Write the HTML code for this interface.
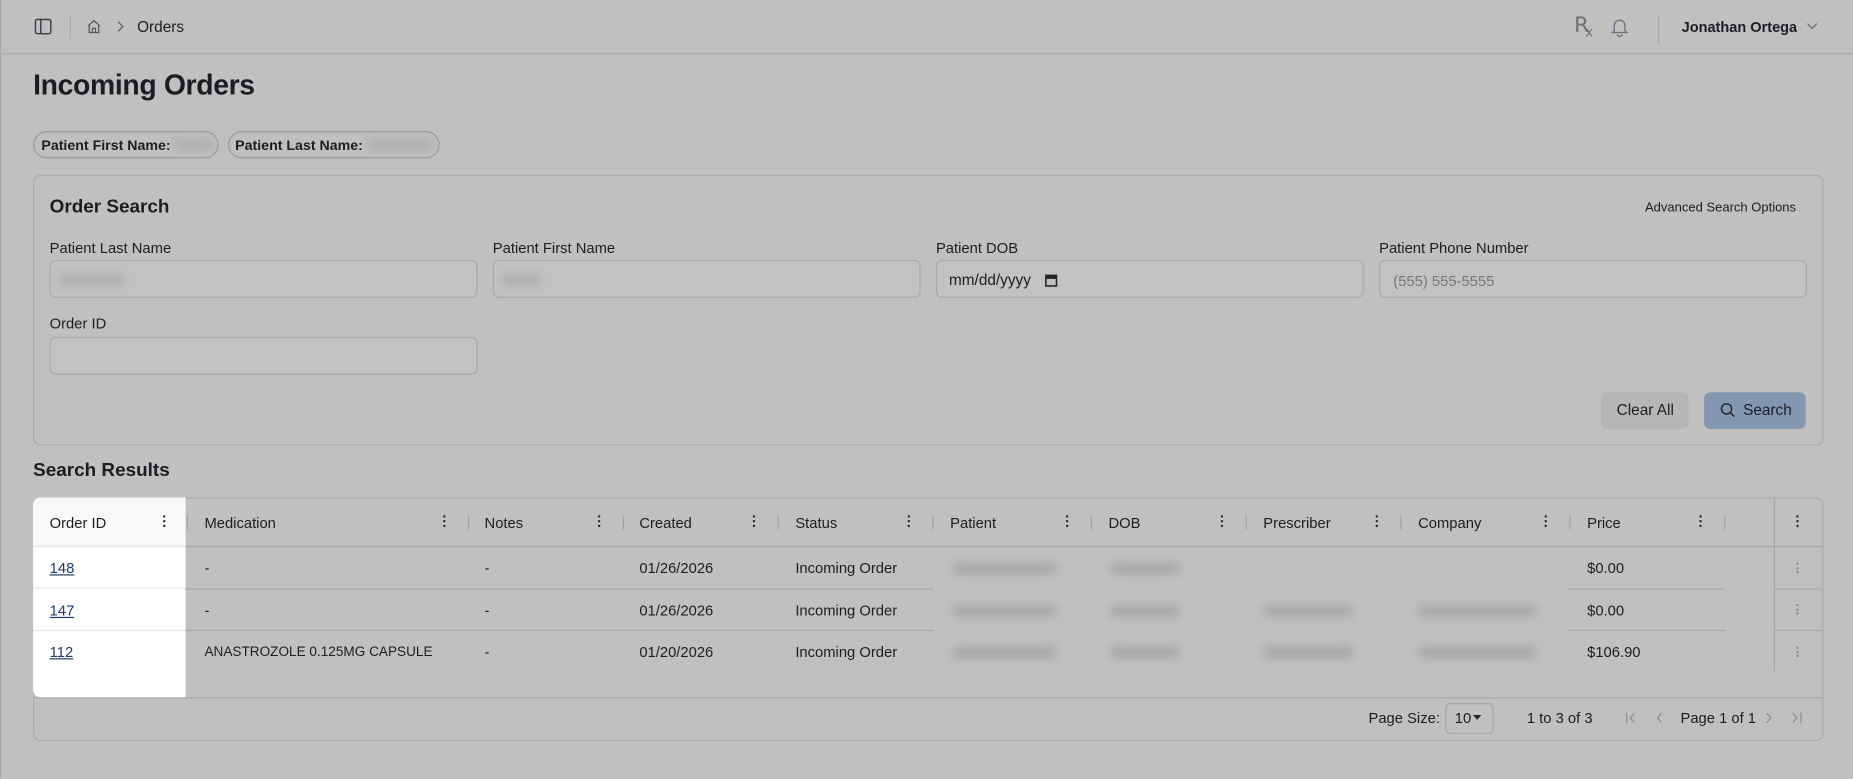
<!DOCTYPE html>
<html><head><meta charset="utf-8">
<style>
html,body{margin:0;padding:0;width:1853px;height:779px;overflow:hidden;background:#c0c0c0;}
#w{position:absolute;left:0;top:0;width:1568px;height:659px;transform:scale(1.18176);transform-origin:0 0;font-family:"Liberation Sans",sans-serif;color:#1b1d22;}
.a{position:absolute;}
.t{position:absolute;white-space:nowrap;font-size:12.5px;line-height:14px;}
.b{font-weight:bold;}
.inp{position:absolute;height:32px;border:1px solid #a8a8a8;border-radius:5px;background:#c2c2c2;box-sizing:border-box;}
.blur{position:absolute;background:#a8a8a8;filter:blur(3.5px);border-radius:3px;height:10px;}
.dots{position:absolute;width:3px;}
.dots i{display:block;width:2.4px;height:2.4px;border-radius:50%;background:#222;margin-bottom:1.6px;}
.sep{position:absolute;width:1px;height:12px;background:#a0a0a0;top:436px;}
.hl{position:absolute;height:1px;background:#a6a6a6;}
</style></head><body><div id="w">
<!-- header -->
<div class="a" style="left:0;top:0;width:1568px;height:46px;border-bottom:1px solid #aaa;box-sizing:border-box;"></div>
<div class="a" style="left:0;top:0;width:1px;height:659px;background:#aaa"></div>
<svg class="a" style="left:29px;top:15px" width="15" height="15" viewBox="0 0 15 15"><rect x="1" y="1.5" width="13" height="12" rx="1.5" fill="none" stroke="#3a3d45" stroke-width="1.2"/><line x1="5.5" y1="1.5" x2="5.5" y2="13.5" stroke="#3a3d45" stroke-width="1.2"/></svg>
<div class="a" style="left:59px;top:13px;width:1px;height:20px;background:#a8a8a8"></div>
<svg class="a" style="left:73px;top:16px" width="13" height="13" viewBox="0 0 13 13"><path d="M1.5 6 L6.5 1.5 L11.5 6 M2.5 5 V11.5 H10.5 V5 M5.2 11.5 V8 H7.8 V11.5" fill="none" stroke="#555" stroke-width="1"/></svg>
<svg class="a" style="left:98px;top:17px" width="8" height="11" viewBox="0 0 8 11"><path d="M2 1.5 L6 5.5 L2 9.5" fill="none" stroke="#555" stroke-width="1"/></svg>
<div class="t" style="left:116px;top:16px;font-size:13px;">Orders</div>
<div class="t" style="left:1332px;top:12px;font-size:18px;line-height:20px;color:#6b7079;font-family:'DejaVu Sans',sans-serif;">R<span style="font-size:11px;margin-left:-3px;position:relative;top:4px">x</span></div>
<svg class="a" style="left:1362px;top:14px" width="17" height="18" viewBox="0 0 17 18"><path d="M4 12 V7.5 A4.5 4.5 0 0 1 13 7.5 V12 L14.5 13.5 H2.5 Z M6.5 15 A2 2 0 0 0 10.5 15" fill="none" stroke="#6b7079" stroke-width="1.1"/></svg>
<div class="a" style="left:1403px;top:13px;width:1px;height:24px;background:#a8a8a8"></div>
<div class="t b" style="left:1423px;top:16px;font-size:12.3px;">Jonathan Ortega</div>
<svg class="a" style="left:1528px;top:18px" width="11" height="8" viewBox="0 0 11 8"><path d="M1.5 2 L5.5 6 L9.5 2" fill="none" stroke="#666" stroke-width="1"/></svg>

<div class="t b" style="left:28px;top:60px;font-size:24px;line-height:26px;letter-spacing:-0.3px;">Incoming Orders</div>
<!-- pills -->
<div class="a" style="left:28px;top:111px;width:157px;height:23px;border:1px solid #999;border-radius:12px;box-sizing:border-box;"></div>
<div class="t b" style="left:35px;top:116px;font-size:12px;">Patient First Name:</div>
<div class="blur" style="left:147px;top:117px;width:34px;height:11px;background:#b0b0b0"></div>
<div class="a" style="left:193px;top:111px;width:179px;height:23px;border:1px solid #999;border-radius:12px;box-sizing:border-box;"></div>
<div class="t b" style="left:199px;top:116px;font-size:12px;">Patient Last Name:</div>
<div class="blur" style="left:311px;top:117px;width:55px;height:11px;background:#b0b0b0"></div>

<!-- search card -->
<div class="a" style="left:28px;top:148px;width:1515px;height:229px;border:1px solid #aaa;border-radius:6px;box-sizing:border-box;"></div>
<div class="t b" style="left:42px;top:167px;font-size:16px;line-height:18px;">Order Search</div>
<div class="t" style="left:1392px;top:169px;font-size:11px;">Advanced Search Options</div>
<div class="t" style="left:42px;top:203px;">Patient Last Name</div>
<div class="t" style="left:417px;top:203px;">Patient First Name</div>
<div class="t" style="left:792px;top:203px;">Patient DOB</div>
<div class="t" style="left:1167px;top:203px;">Patient Phone Number</div>
<div class="inp" style="left:42px;top:220px;width:362px;"></div>
<div class="blur" style="left:50px;top:232px;width:55px;height:10px;background:#afafaf"></div>
<div class="inp" style="left:417px;top:220px;width:362px;"></div>
<div class="blur" style="left:424px;top:232px;width:34px;height:10px;background:#afafaf"></div>
<div class="inp" style="left:792px;top:220px;width:362px;"></div>
<div class="t" style="left:803px;top:230px;font-size:13px;">mm/dd/yyyy</div>
<svg class="a" style="left:884px;top:231px" width="11" height="12" viewBox="0 0 11 12"><rect x="1" y="2" width="9" height="9" fill="none" stroke="#222" stroke-width="1.3"/><rect x="1" y="2" width="9" height="3" fill="#222"/></svg>
<div class="inp" style="left:1167px;top:220px;width:362px;"></div>
<div class="t" style="left:1179px;top:231px;font-size:12.5px;color:#777;">(555) 555-5555</div>
<div class="t" style="left:42px;top:267px;">Order ID</div>
<div class="inp" style="left:42px;top:285px;width:362px;"></div>
<div class="a" style="left:1355px;top:332px;width:74px;height:31px;background:#b6b6b6;border-radius:5px;"></div>
<div class="t" style="left:1368px;top:340px;font-size:13px;">Clear All</div>
<div class="a" style="left:1442px;top:332px;width:86px;height:31px;background:#8497b1;border-radius:5px;"></div>
<svg class="a" style="left:1455px;top:340px" width="14" height="14" viewBox="0 0 14 14"><circle cx="6" cy="6" r="4.3" fill="none" stroke="#222" stroke-width="1.2"/><path d="M9.2 9.2 L12.5 12.5" stroke="#222" stroke-width="1.2"/></svg>
<div class="t" style="left:1475px;top:340px;font-size:13px;">Search</div>

<div class="t b" style="left:28px;top:390px;font-size:16px;line-height:18px;">Search Results</div>

<!-- table -->
<div class="a" style="left:28px;top:421px;width:1515px;height:206px;border:1px solid #aaa;border-radius:6px;box-sizing:border-box;"></div>
<div class="hl" style="left:28px;top:462px;width:1514px;"></div>
<div class="hl" style="left:28px;top:590px;width:1514px;"></div>
<div class="hl" style="left:28px;top:498px;width:762px;"></div>
<div class="hl" style="left:28px;top:533px;width:762px;"></div>
<div class="hl" style="left:1326px;top:498px;width:134px;"></div>
<div class="hl" style="left:1326px;top:533px;width:134px;"></div>
<div class="hl" style="left:1501px;top:498px;width:41px;"></div>
<div class="hl" style="left:1501px;top:533px;width:41px;"></div>
<div class="a" style="left:1501px;top:422px;width:1px;height:146px;background:#a6a6a6"></div>
<!-- pinned white col -->
<div class="a" style="left:28px;top:421px;width:129px;height:169px;background:#fff;border-radius:6px 0 0 6px;"></div>
<div class="a" style="left:28px;top:421px;width:129px;height:41px;background:#f9f9f9;border-radius:6px 0 0 0;"></div>
<div class="hl" style="left:28px;top:462px;width:129px;background:#e4e4e4"></div>
<div class="hl" style="left:28px;top:497px;width:129px;background:#e4e4e4"></div>
<div class="hl" style="left:28px;top:533px;width:129px;background:#e4e4e4"></div>

<!-- headers -->
<div class="t" style="left:42px;top:436px;">Order ID</div>
<div class="t" style="left:173px;top:436px;">Medication</div>
<div class="t" style="left:410px;top:436px;">Notes</div>
<div class="t" style="left:541px;top:436px;">Created</div>
<div class="t" style="left:673px;top:436px;">Status</div>
<div class="t" style="left:804px;top:436px;">Patient</div>
<div class="t" style="left:938px;top:436px;">DOB</div>
<div class="t" style="left:1069px;top:436px;">Prescriber</div>
<div class="t" style="left:1200px;top:436px;">Company</div>
<div class="t" style="left:1343px;top:436px;">Price</div>
<div class="dots" style="left:138px;top:436px"><i></i><i></i><i></i></div>
<div class="dots" style="left:375px;top:436px"><i></i><i></i><i></i></div>
<div class="dots" style="left:506px;top:436px"><i></i><i></i><i></i></div>
<div class="dots" style="left:637px;top:436px"><i></i><i></i><i></i></div>
<div class="dots" style="left:768px;top:436px"><i></i><i></i><i></i></div>
<div class="dots" style="left:902px;top:436px"><i></i><i></i><i></i></div>
<div class="dots" style="left:1033px;top:436px"><i></i><i></i><i></i></div>
<div class="dots" style="left:1164px;top:436px"><i></i><i></i><i></i></div>
<div class="dots" style="left:1307px;top:436px"><i></i><i></i><i></i></div>
<div class="dots" style="left:1438px;top:436px"><i></i><i></i><i></i></div>
<div class="dots" style="left:1520px;top:436px"><i></i><i></i><i></i></div>
<div class="sep" style="left:158px"></div><div class="sep" style="left:396px"></div><div class="sep" style="left:527px"></div><div class="sep" style="left:658px"></div><div class="sep" style="left:789px"></div><div class="sep" style="left:923px"></div><div class="sep" style="left:1054px"></div><div class="sep" style="left:1185px"></div><div class="sep" style="left:1328px"></div><div class="sep" style="left:1459px"></div>

<!-- rows -->
<div class="t" style="left:42px;top:474px;color:#1d3a6b;text-decoration:underline;">148</div>
<div class="t" style="left:42px;top:510px;color:#1d3a6b;text-decoration:underline;">147</div>
<div class="t" style="left:42px;top:545px;color:#1d3a6b;text-decoration:underline;">112</div>
<div class="t" style="left:173px;top:474px;">-</div>
<div class="t" style="left:173px;top:510px;">-</div>
<div class="t" style="left:173px;top:545px;font-size:11.5px;">ANASTROZOLE 0.125MG CAPSULE</div>
<div class="t" style="left:410px;top:474px;">-</div><div class="t" style="left:410px;top:510px;">-</div><div class="t" style="left:410px;top:545px;">-</div>
<div class="t" style="left:541px;top:474px;">01/26/2026</div><div class="t" style="left:541px;top:510px;">01/26/2026</div><div class="t" style="left:541px;top:545px;">01/20/2026</div>
<div class="t" style="left:673px;top:474px;">Incoming Order</div><div class="t" style="left:673px;top:510px;">Incoming Order</div><div class="t" style="left:673px;top:545px;">Incoming Order</div>
<div class="t" style="left:1343px;top:474px;">$0.00</div><div class="t" style="left:1343px;top:510px;">$0.00</div><div class="t" style="left:1343px;top:545px;">$106.90</div>
<!-- blurred -->
<div class="blur" style="left:806px;top:476px;width:88px"></div><div class="blur" style="left:940px;top:476px;width:58px"></div>
<div class="blur" style="left:806px;top:512px;width:88px"></div><div class="blur" style="left:940px;top:512px;width:58px"></div><div class="blur" style="left:1069px;top:512px;width:76px"></div><div class="blur" style="left:1200px;top:512px;width:100px"></div>
<div class="blur" style="left:806px;top:547px;width:88px"></div><div class="blur" style="left:940px;top:547px;width:58px"></div><div class="blur" style="left:1069px;top:547px;width:76px"></div><div class="blur" style="left:1200px;top:547px;width:100px"></div>
<div class="dots" style="left:1520px;top:476px"><i style="background:#888;width:2px;height:2px"></i><i style="background:#888;width:2px;height:2px"></i><i style="background:#888;width:2px;height:2px"></i></div>
<div class="dots" style="left:1520px;top:511px"><i style="background:#888;width:2px;height:2px"></i><i style="background:#888;width:2px;height:2px"></i><i style="background:#888;width:2px;height:2px"></i></div>
<div class="dots" style="left:1520px;top:547px"><i style="background:#888;width:2px;height:2px"></i><i style="background:#888;width:2px;height:2px"></i><i style="background:#888;width:2px;height:2px"></i></div>

<!-- footer -->
<div class="t" style="left:1158px;top:601px;">Page Size:</div>
<div class="a" style="left:1223px;top:595px;width:41px;height:26px;border:1px solid #a6a6a6;border-radius:4px;box-sizing:border-box;"></div>
<div class="t" style="left:1231px;top:601px;">10</div>
<svg class="a" style="left:1246px;top:604px" width="8" height="6" viewBox="0 0 8 6"><path d="M0.5 1 H7.5 L4 5 Z" fill="#222"/></svg>
<div class="t" style="left:1292px;top:601px;">1 to 3 of 3</div>
<svg class="a" style="left:1375px;top:602px" width="60" height="11" viewBox="0 0 60 11"><path d="M1.5 1 V10 M8 1.5 L4.5 5.5 L8 9.5 M31 1.5 L27.5 5.5 L31 9.5" fill="none" stroke="#8a8a8a" stroke-width="1"/></svg>
<div class="t" style="left:1422px;top:601px;">Page 1 of 1</div>
<svg class="a" style="left:1492px;top:602px" width="40" height="11" viewBox="0 0 40 11"><path d="M3 1.5 L6.5 5.5 L3 9.5 M25 1.5 L28.5 5.5 L25 9.5 M32 1 V10" fill="none" stroke="#8a8a8a" stroke-width="1"/></svg>
</div></body></html>
